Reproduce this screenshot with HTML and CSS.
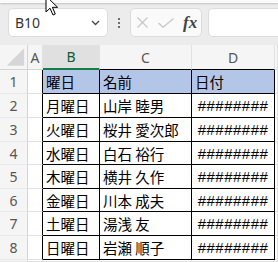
FILE: index.html
```html
<!doctype html>
<html>
  <head>
    <title>Sheet</title>
    <link rel="stylesheet" href="styles.css">
  </head>
  <body>
    <div class="ribbon"></div>
    <div class="formula-bar">
      <div class="name-box">
        <span>B10</span>
        <svg width="9" height="6" viewBox="0 0 9 6"><path d="M1 1 L4.5 4.5 L8 1" fill="none" stroke="#444" stroke-width="1.3"/></svg>
      </div>
      <div class="dots"><i></i><i></i><i></i></div>
      <div class="fx-box">
        <svg class="cancel" width="11" height="11" viewBox="0 0 11 11"><path d="M0.5 0.5 L10.5 10.5 M10.5 0.5 L0.5 10.5" stroke="#c9c9c9" stroke-width="1.3"/></svg>
        <svg class="enter" width="16" height="10" viewBox="0 0 16 10"><path d="M0.5 5 L5 9.3 L15.5 0.5" fill="none" stroke="#c9c9c9" stroke-width="1.3"/></svg>
        <span class="fx">fx</span>
      </div>
      <div class="input-box"></div>
    </div>

    <div class="sheet">
      <div class="corner"><svg width="28" height="25" viewBox="0 0 28 25"><polygon points="25,3 25,21 7,21" fill="#d6d6d6"/></svg></div>
      <div class="col">A</div>
      <div class="col sel">B</div>
      <div class="col edge">C</div>
      <div class="col edge">D</div>
      <div class="col"></div>

      <div class="row">1</div>
      <div class="a edge"></div>
      <div class="t head">曜日</div>
      <div class="t head">名前</div>
      <div class="t head">日付</div>
      <div></div>

      <div class="row">2</div>
      <div class="a edge"></div>
      <div class="t">月曜日</div>
      <div class="t">山岸 睦男</div>
      <div class="t hash">########</div>
      <div></div>

      <div class="row">3</div>
      <div class="a edge"></div>
      <div class="t">火曜日</div>
      <div class="t">桜井 愛次郎</div>
      <div class="t hash">########</div>
      <div></div>

      <div class="row">4</div>
      <div class="a edge"></div>
      <div class="t">水曜日</div>
      <div class="t">白石 裕行</div>
      <div class="t hash">########</div>
      <div></div>

      <div class="row">5</div>
      <div class="a edge"></div>
      <div class="t">木曜日</div>
      <div class="t">横井 久作</div>
      <div class="t hash">########</div>
      <div></div>

      <div class="row">6</div>
      <div class="a edge"></div>
      <div class="t">金曜日</div>
      <div class="t">川本 成夫</div>
      <div class="t hash">########</div>
      <div></div>

      <div class="row">7</div>
      <div class="a edge"></div>
      <div class="t">土曜日</div>
      <div class="t">湯浅 友</div>
      <div class="t hash">########</div>
      <div></div>

      <div class="row">8</div>
      <div class="a edge"></div>
      <div class="t">日曜日</div>
      <div class="t">岩瀬 順子</div>
      <div class="t hash">########</div>
      <div></div>

      <div class="row"></div>
      <div></div>
      <div></div>
      <div></div>
      <div></div>
      <div></div>
    </div>

    <svg class="cursor" width="14" height="22" viewBox="0 0 14 22"><path d="M1 1 L1 17 L5 13.2 L8 20 L10.3 19 L7.4 12.3 L12.6 12.3 Z" fill="#fff" stroke="#000" stroke-width="1"/></svg>
  </body>
</html>
```

FILE: styles.css
```css
body {
  margin: 0;
  width: 278px;
  height: 262px;
  overflow: hidden;
  position: relative;
  background: #ececec;
  font-family: "Noto Sans", "Liberation Sans", sans-serif;
}

.ribbon {
  height: 3px;
  background: #fafafa;
  box-shadow: 0 1px 2px rgba(0, 0, 0, 0.18);
}

.formula-bar {
  display: flex;
  align-items: center;
  padding: 5px 0 8px 8px;
}

.name-box {
  box-sizing: border-box;
  width: 100px;
  height: 29px;
  display: flex;
  align-items: center;
  justify-content: space-between;
  padding: 0 7px 0 6px;
  background: #fff;
  border: 1px solid #dcdcdc;
  border-radius: 5px;
  font-size: 14px;
  color: #333;
}

.dots {
  width: 22px;
  display: flex;
  flex-direction: column;
  align-items: center;
  gap: 2px;
}

.dots i {
  width: 2px;
  height: 2px;
  background: #444;
  border-radius: 1px;
}

.fx-box {
  box-sizing: border-box;
  width: 72px;
  height: 29px;
  display: flex;
  align-items: center;
  padding-left: 6px;
  background: #fafafa;
  border: 1px solid #dcdcdc;
  border-radius: 5px;
}

.enter {
  margin-left: 10px;
}

.fx {
  margin-left: 9px;
  font-family: "Liberation Serif", serif;
  font-style: italic;
  font-weight: bold;
  font-size: 17px;
  color: #444;
}

.input-box {
  flex: 1;
  height: 29px;
  box-sizing: border-box;
  margin: 0 -10px 0 6px;
  background: #fff;
  border: 1px solid #dcdcdc;
  border-radius: 5px;
}

.sheet {
  display: grid;
  grid-template-columns: 28px 15px 57px 92px 83px 3px;
  grid-template-rows: 25px 24px 24px 24px 23px 24px 23px 24px 24px 2px;
  background: #fff;
  font-family: "Noto Sans CJK JP", sans-serif;
  font-size: 14.5px;
  color: #000;
}

.sheet > div {
  box-sizing: border-box;
  display: flex;
  align-items: center;
  overflow: hidden;
  white-space: nowrap;
  border-right: 1px solid #e1e1e1;
  border-bottom: 1px solid #e1e1e1;
}

.sheet > .corner {
  background: #f5f5f5;
  border-right-color: #d4d4d4;
  border-bottom-color: #d4d4d4;
}

.sheet > .col {
  justify-content: center;
  background: #f5f5f5;
  border-bottom-color: #d4d4d4;
  font-family: "Noto Sans", sans-serif;
  font-size: 14px;
  color: #555;
}

.sheet > .col.sel {
  background: #e0e0e0;
  border-bottom: 2px solid #137e43;
  color: #0f5c30;
}

.sheet > .col.edge {
  border-bottom-color: #000;
}

.sheet > .row {
  justify-content: center;
  background: #f5f5f5;
  border-right-color: #d4d4d4;
  border-bottom-color: #e8e8e8;
  font-family: "Noto Sans", sans-serif;
  font-size: 14px;
  color: #555;
}

.sheet > .a.edge {
  border-right-color: #000;
}

.sheet > .t {
  padding-left: 3px;
  border-right-color: #000;
  border-bottom-color: #000;
}

.sheet > .t.head {
  background: #b4c6e7;
}

.sheet > .t.hash {
  justify-content: center;
  padding-left: 0;
  font-family: "Liberation Sans", sans-serif;
  font-size: 15px;
  letter-spacing: 0.5px;
}

.cursor {
  position: absolute;
  left: 45px;
  top: -5px;
}
```
